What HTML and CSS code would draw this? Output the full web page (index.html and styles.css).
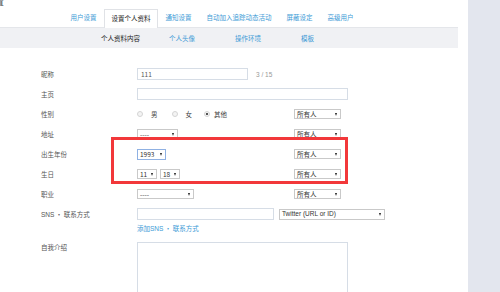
FILE: index.html
```html
<!DOCTYPE html>
<html lang="zh-CN">
<head>
<meta charset="utf-8">
<title>设置个人资料</title>
<link rel="stylesheet" href="styles.css">
</head>
<body>
<div class="page">
  <div class="main">
    <div class="content">
      <div class="crumb"><span>置</span></div>
      <nav class="tabs">
        <a class="tab">用户设置</a>
        <a class="tab active">设置个人资料</a>
        <a class="tab">通知设置</a>
        <a class="tab">自动加入追踪动态活动</a>
        <a class="tab">屏蔽设定</a>
        <a class="tab">高级用户</a>
      </nav>
      <nav class="subnav">
        <a class="sub active">个人资料内容</a>
        <a class="sub s2">个人头像</a>
        <a class="sub s3">操作环境</a>
        <a class="sub s3">模板</a>
      </nav>
      <div class="form">
        <div class="row">
          <div class="label">昵称</div>
          <div class="field span">
            <div class="inp w-nick">111</div>
            <span class="count">3 / 15</span>
          </div>
        </div>
        <div class="row">
          <div class="label">主页</div>
          <div class="field span"><div class="inp w-wide"></div></div>
        </div>
        <div class="row">
          <div class="label">性别</div>
          <div class="field radios">
            <span class="radio"></span><span class="rtext">男</span>
            <span class="radio"></span><span class="rtext">女</span>
            <span class="radio checked"></span><span class="rtext last">其他</span>
          </div>
          <div class="field"><div class="sel w-priv">所有人</div></div>
        </div>
        <div class="row">
          <div class="label">地址</div>
          <div class="field"><div class="sel w-addr">----</div></div>
          <div class="field"><div class="sel w-priv">所有人</div></div>
        </div>
        <div class="row">
          <div class="label">出生年份</div>
          <div class="field"><div class="sel w-year focus">1993</div></div>
          <div class="field"><div class="sel w-priv">所有人</div></div>
        </div>
        <div class="row">
          <div class="label">生日</div>
          <div class="field pair">
            <div class="sel w-day">11</div>
            <div class="sel w-day">18</div>
          </div>
          <div class="field"><div class="sel w-priv">所有人</div></div>
        </div>
        <div class="row">
          <div class="label">职业</div>
          <div class="field"><div class="sel w-job">----</div></div>
          <div class="field"><div class="sel w-priv">所有人</div></div>
        </div>
        <div class="row">
          <div class="label"><span class="latin">SNS</span> ・ 联系方式</div>
          <div class="field span sns">
            <div class="inp w-sns"></div>
            <div class="sel w-tw latin">Twitter (URL or ID)</div>
          </div>
        </div>
        <div class="linkrow"><a class="addlink">添加<span class="latin">SNS</span> ・ 联系方式</a></div>
        <div class="row tall">
          <div class="label">自我介绍</div>
          <div class="field span"><div class="textarea"></div></div>
        </div>
      </div>
    </div>
    <div class="highlight"></div>
  </div>
  <aside class="side"></aside>
</div>
</body>
</html>
```
FILE: styles.css
```css
html, body {
  margin: 0;
  padding: 0;
  overflow: hidden;
  background: #fff;
}
body {
  font-family: "Noto Sans CJK SC", "Liberation Sans", sans-serif;
  font-size: 6.5px;
  color: #555;
}
.page {
  display: flex;
  width: 500px;
  height: 292px;
  overflow: hidden;
}
.main {
  position: relative;
  width: 468px;
  flex: none;
}
.content {
  width: 458px;
}
.side {
  flex: 1;
  background: #e3e6ee;
}
.crumb {
  height: 9px;
  overflow: hidden;
}
.crumb span {
  display: block;
  margin-left: -5px;
  margin-top: -3px;
  font-size: 9px;
  line-height: 9px;
  color: #555;
}
.tabs {
  display: flex;
  align-items: flex-end;
  height: 18px;
  padding-left: 63px;
  border-bottom: 1px solid #e4e6ea;
}
.tab {
  display: block;
  height: 18px;
  line-height: 17px;
  padding: 0 7.5px;
  color: #3d9ad6;
  box-sizing: border-box;
}
.tab.active {
  color: #222;
  background: #fff;
  border: 1px solid #e0e2e6;
  border-bottom: none;
  height: 19px;
  margin-bottom: -1px;
  padding: 0 6.5px;
}
.subnav {
  display: flex;
  height: 20px;
  line-height: 20px;
  background: #f0f1f4;
  padding-left: 101px;
}
.sub {
  color: #3d9ad6;
}
.sub.active {
  color: #222;
}
.sub.s2 {
  margin-left: 29px;
}
.sub.s3 {
  margin-left: 40px;
}
.form {
  padding: 16px 0 0 41px;
}
.row {
  display: grid;
  grid-template-columns: 96px 157px 1fr;
  height: 20px;
  align-items: center;
}
.label {
  color: #555;
}
.field {
  display: flex;
  align-items: center;
}
.field.span {
  grid-column: 2 / 4;
}
.inp {
  height: 12px;
  border: 1px solid #d6dde6;
  box-sizing: border-box;
  padding-left: 3px;
  line-height: 10px;
  color: #555;
  background: #fff;
}
.w-nick { width: 111px; }
.w-wide { width: 211px; }
.w-sns { width: 137px; }
.count {
  margin-left: 8px;
  color: #999;
  font-family: "Liberation Sans", sans-serif;
}
.radio {
  width: 6px;
  height: 6px;
  border-radius: 50%;
  border: 1px solid #d4d4d4;
  background: #f4f4f4;
  box-sizing: border-box;
  position: relative;
}
.radio.checked::after {
  content: "";
  position: absolute;
  left: 1.2px;
  top: 1.2px;
  width: 1.6px;
  height: 1.6px;
  border-radius: 50%;
  background: #333;
}
.rtext {
  margin-left: 8px;
  margin-right: 14px;
  color: #444;
}
.rtext.last {
  margin-left: 4px;
}
.radios .rtext:nth-of-type(4) {
  margin-right: 12px;
}
.sel {
  display: flex;
  align-items: center;
  justify-content: space-between;
  height: 10px;
  border: 1px solid #c9c9c9;
  background: #fff;
  box-sizing: border-box;
  padding: 0 3px 0 2px;
  color: #333;
  line-height: 8px;
}
.sel::after {
  content: "";
  border-left: 1.5px solid transparent;
  border-right: 1.5px solid transparent;
  border-top: 3px solid #222;
}
.sel.focus {
  border-color: #8fb1e3;
  height: 11px;
}
.w-priv { width: 47px; }
.w-addr { width: 41px; }
.w-year { width: 29px; }
.w-day { width: 20px; }
.w-job { width: 57px; }
.w-tw { width: 106px; }
.latin {
  font-family: "Liberation Sans", sans-serif;
}
.pair {
  gap: 3px;
}
.sns {
  gap: 5px;
}
.sns .sel {
  height: 11px;
}
.linkrow {
  height: 9px;
  line-height: 9px;
  padding-left: 96px;
}
.addlink {
  color: #3d9ad6;
}
.row.tall {
  margin-top: 9px;
  height: 60px;
  align-items: start;
}
.row.tall .label {
  line-height: 10px;
}
.textarea {
  width: 211px;
  height: 60px;
  border: 1px solid #d6dde6;
  box-sizing: border-box;
}
.highlight {
  position: absolute;
  left: 111px;
  top: 137px;
  width: 237px;
  height: 47px;
  border: 3px solid #f2383a;
  box-sizing: border-box;
}
```
